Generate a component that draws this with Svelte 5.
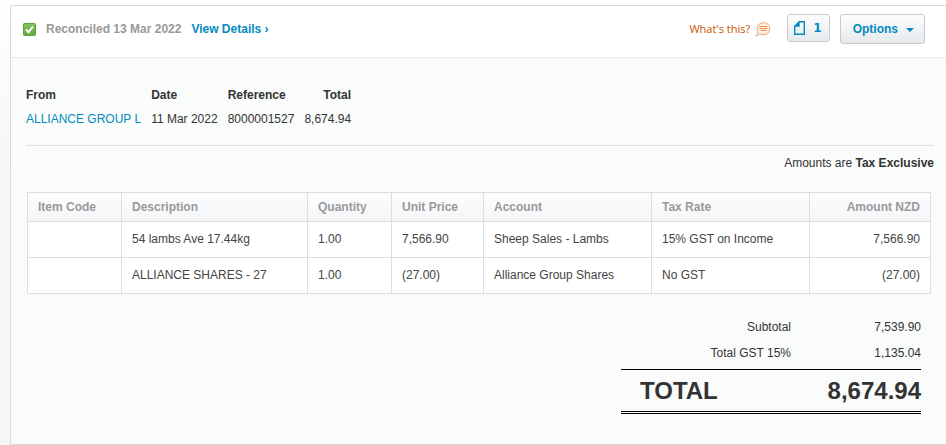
<script>
  const columns = [
    { name: 'Item Code', width: 94 },
    { name: 'Description', width: 186 },
    { name: 'Quantity', width: 84 },
    { name: 'Unit Price', width: 92 },
    { name: 'Account', width: 168 },
    { name: 'Tax Rate', width: 158 },
    { name: 'Amount NZD', width: 121 }
  ];
  const lines = [
    ['', '54 lambs Ave 17.44kg', '1.00', '7,566.90', 'Sheep Sales - Lambs', '15% GST on Income', '7,566.90'],
    ['', 'ALLIANCE SHARES - 27', '1.00', '(27.00)', 'Alliance Group Shares', 'No GST', '(27.00)']
  ];
</script>

<main class="panel">
  <header class="bar">
    <svg class="tick" viewBox="0 0 13 13" aria-hidden="true">
      <defs>
        <linearGradient id="green" x1="0" y1="0" x2="0" y2="1">
          <stop offset="0" stop-color="#87c365" />
          <stop offset="1" stop-color="#62a93c" />
        </linearGradient>
      </defs>
      <rect x="0.5" y="0.5" width="12" height="12" rx="1" fill="url(#green)" stroke="#5b9f38" />
      <path d="M3 6.5L5.5 9.2L10 3.5" fill="none" stroke="#fff" stroke-width="2" />
    </svg>
    <span class="status">Reconciled 13 Mar 2022</span>
    <a class="details" href="#details">View Details ›</a>
    <a class="help" href="#help">
      What's this?
      <svg class="bubble" viewBox="0 0 16 15" aria-hidden="true">
        <path d="M8.5 0.7C12.3 0.7 14.7 3.3 14.7 6.7C14.7 10.2 12.2 12.8 8.4 12.8C6.9 12.8 5.8 12.4 4.9 11.8C3.9 13 2.4 13.8 0.8 13.8C1.8 13 2.6 11.7 2.8 10.4C0.9 6 3 0.7 8.5 0.7Z" fill="#fdeedd" stroke="#e5a680" />
        <path d="M4.5 4.5H12.5M4.5 6.5H12.5M5.5 8.5H11.5" fill="none" stroke="#e89150" />
      </svg>
    </a>
    <div class="actions">
      <button class="files" aria-label="1 file">
        <svg class="page" viewBox="0 0 11 14" aria-hidden="true">
          <path d="M5 0.7H10.3V13.3H0.7V5" fill="none" stroke="#048abf" stroke-width="1.4" />
          <path d="M0 5.7V5L5 0H5.7V5.7Z" fill="#048abf" />
        </svg>
        <span>1</span>
      </button>
      <button class="options">
        Options
        <svg class="caret" viewBox="0 0 8 4" aria-hidden="true"><path d="M0.5 0H7.5V0.5L4 4L0.5 0.5Z" fill="#048abf" /></svg>
      </button>
    </div>
  </header>

  <div class="body">
    <table class="summary">
      <thead>
        <tr><th>From</th><th>Date</th><th>Reference</th><th class="num">Total</th></tr>
      </thead>
      <tbody>
        <tr>
          <td><a href="#contact">ALLIANCE GROUP L</a></td>
          <td>11 Mar 2022</td>
          <td>8000001527</td>
          <td class="num">8,674.94</td>
        </tr>
      </tbody>
    </table>

    <p class="tax">Amounts are <strong>Tax Exclusive</strong></p>

    <div class="inner">
      <table class="lines">
        <colgroup>
          {#each columns as column}
            <col style:width="{column.width}px" />
          {/each}
        </colgroup>
        <thead>
          <tr>
            {#each columns as column}<th>{column.name}</th>{/each}
          </tr>
        </thead>
        <tbody>
          {#each lines as line}
            <tr>
              {#each line as cell}<td>{cell}</td>{/each}
            </tr>
          {/each}
        </tbody>
      </table>
    </div>

    <table class="totals">
      <tbody>
        <tr><th>Subtotal</th><td>7,539.90</td></tr>
        <tr><th>Total GST 15%</th><td>1,135.04</td></tr>
      </tbody>
    </table>
    <table class="totals grand">
      <tbody>
        <tr><th>TOTAL</th><td>8,674.94</td></tr>
      </tbody>
    </table>
  </div>
</main>

<style>
  :global(body) {
    background: linear-gradient(#fff, #f5f6f8 170px) no-repeat #f5f6f8;
  }
  :global(#app) {
    display: flow-root;
  }
  .panel {
    margin: 5px 0 0 10px;
    border: 1px solid #d9dadb;
    border-right: 0;
    border-radius: 3px 0 0 0;
    background: #fafcfb;
    color: #333;
    font: 12px/18px "Liberation Sans", Arial, sans-serif;
  }
  a {
    color: #048abf;
    text-decoration: none;
  }
  .bar {
    display: flex;
    align-items: center;
    box-sizing: border-box;
    height: 52px;
    padding: 0 21px 5px 12px;
    border-bottom: 1px solid #e6e9ea;
    border-radius: 3px 0 0 0;
    background: #fff;
  }
  .tick {
    width: 13px;
    height: 13px;
  }
  .status {
    margin-left: 10px;
    color: #999;
    font-weight: bold;
  }
  .details {
    margin-left: 10px;
    font-weight: bold;
  }
  .help {
    display: flex;
    align-items: center;
    gap: 5px;
    margin-left: auto;
    color: #cc5200;
    font: 11px/18px "Open Sans", "Noto Sans", sans-serif;
  }
  .bubble {
    width: 16px;
    height: 15px;
  }
  .actions {
    display: flex;
    align-items: flex-start;
    gap: 10px;
    margin-left: 16px;
  }
  button {
    display: flex;
    align-items: center;
    box-sizing: border-box;
    border: 1px solid #c6cbce;
    border-radius: 3px;
    background: linear-gradient(#fdfdfd, #e6eaed);
    color: #048abf;
    font: bold 12px/18px "Liberation Sans", Arial, sans-serif;
  }
  .files {
    gap: 8px;
    height: 28px;
    padding: 0 7px 0 6px;
    font-family: "DejaVu Sans", sans-serif;
  }
  .page {
    width: 11px;
    height: 14px;
  }
  .options {
    gap: 8px;
    height: 30px;
    padding: 0 10px 0 12px;
  }
  .caret {
    width: 8px;
    height: 4px;
    margin-top: 2px;
  }
  .body {
    padding: 25px 12px 30px 15px;
  }
  table {
    border-spacing: 0;
  }
  th,
  td {
    padding: 0;
    text-align: left;
  }
  .summary th,
  .summary td {
    height: 24px;
    padding-right: 10px;
  }
  .summary .num {
    padding-right: 0;
    text-align: right;
  }
  .tax {
    margin: 14px 0 0;
    padding: 8px 0 20px;
    border-top: 1px solid #dddfdf;
    text-align: right;
  }
  .inner {
    padding: 0 3px 0 1px;
  }
  .lines {
    width: 100%;
    table-layout: fixed;
    border-collapse: collapse;
    background: #fff;
  }
  .lines th,
  .lines td {
    padding: 8px 10px 9px;
    border: 1px solid #dddfdf;
    color: #444;
  }
  .lines th {
    padding: 5px 10px;
    background: linear-gradient(#fcfdfd, #f4f5f8);
    color: #999;
  }
  .lines tr > :last-child {
    text-align: right;
  }
  .totals {
    width: 300px;
    margin: 20px 13px 0 auto;
    table-layout: fixed;
  }
  .totals th,
  .totals td {
    height: 26px;
    font-weight: normal;
    text-align: right;
  }
  .totals th {
    width: 170px;
  }
  .grand {
    margin-top: 3px;
    border-top: 1px solid #000;
    border-bottom: 3px double #000;
    font-size: 24px;
  }
  .grand th,
  .grand td {
    height: 41px;
    font-weight: bold;
  }
  .grand th {
    box-sizing: border-box;
    padding-left: 19px;
    text-align: left;
  }
</style>
